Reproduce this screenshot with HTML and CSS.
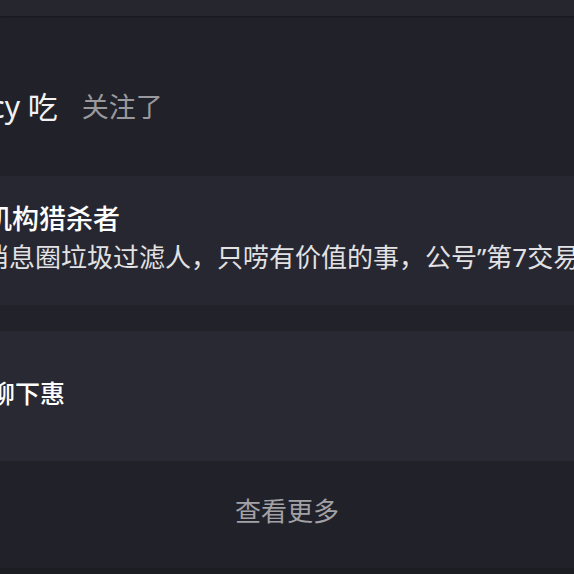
FILE: index.html
```html
<!DOCTYPE html>
<html lang="zh-CN">
<head>
    <meta charset="UTF-8">
    <meta name="viewport" content="width=device-width, initial-scale=1.0">
    <title>关注</title>
    <link rel="stylesheet" href="styles.css">
</head>
<body>
    <div class="topbar"></div>

    <!-- profile row -->
    <div class="profile">
        <span class="name">Lucy 吃</span>
        <span class="follow">关注了</span>
    </div>

    <div class="card card-first">
        <div class="card-title">机构猎杀者</div>
        <div class="card-desc">消息圈垃圾过滤人，只唠有价值的事，公号”第7交易日”</div>
    </div>

    <div class="gap"></div>

    <div class="card card-second">
        <div class="card-title title-short">柳下惠</div>
    </div>

    <div class="more">查看更多</div>
    <div class="bottom"></div>
</body>
</html>
```

FILE: styles.css
```css
body, html {
    margin: 0;
    padding: 0;
    background-color: #22222a;
    font-family: "Noto Sans", "Noto Sans CJK SC", sans-serif;
    overflow: hidden;
    white-space: nowrap;
}

.topbar {
    height: 16px;
    background-color: #26262f;
    box-shadow: 0 1px 2px rgba(0, 0, 0, 0.35);
    position: relative;
}

.profile {
    height: 160px;
    display: flex;
    align-items: center;
    background-color: #21212a;
    padding-top: 18px;
    box-sizing: border-box;
}

.name {
    font-size: 30px;
    color: #f2f2f2;
    margin-left: -44px;
}

.follow {
    font-size: 27px;
    color: #9a9a9e;
    margin-left: 24px;
}

.card {
    display: flex;
    flex-direction: column;
    justify-content: center;
}

.card-first {
    height: 129px;
    background-color: #272731;
    padding-bottom: 6px;
    box-sizing: border-box;
}

.card-second {
    height: 130px;
    background-color: #292933;
}

.card-title {
    font-size: 27px;
    font-weight: 500;
    color: #ffffff;
    line-height: 38px;
    margin-left: -15px;
}

.title-short {
    font-size: 25px;
    margin-left: -10px;
    margin-bottom: 6px;
}

.card-desc {
    font-size: 26px;
    color: #e2e2e4;
    line-height: 38px;
    margin-left: -17px;
}

.gap {
    height: 26px;
    background-color: #22222a;
}

.more {
    height: 107px;
    display: flex;
    align-items: center;
    justify-content: center;
    font-size: 26px;
    color: #a2a2a6;
    background-color: #212129;
    padding-bottom: 10px;
    box-sizing: border-box;
}

.bottom {
    height: 6px;
    background-color: #1c1c23;
}
```
